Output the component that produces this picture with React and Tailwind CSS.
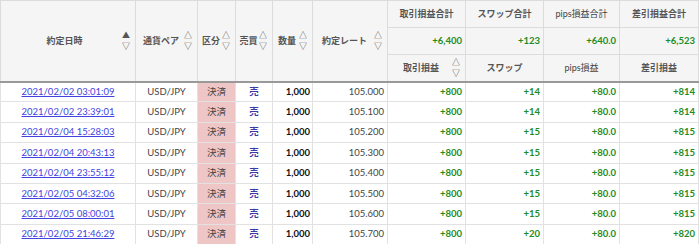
import React from "react";

const rows = [
  ["2021/02/02 03:01:09", "105.000", "+14", "+814"],
  ["2021/02/02 23:39:01", "105.100", "+14", "+814"],
  ["2021/02/04 15:28:03", "105.200", "+15", "+815"],
  ["2021/02/04 20:43:13", "105.300", "+15", "+815"],
  ["2021/02/04 23:55:12", "105.400", "+15", "+815"],
  ["2021/02/05 04:32:06", "105.500", "+15", "+815"],
  ["2021/02/05 08:00:01", "105.600", "+15", "+815"],
  ["2021/02/05 21:46:29", "105.700", "+20", "+820"],
];

function Arrows({ up = false }) {
  return (
    <div className="flex flex-col items-center leading-[11px] text-[8px] text-[#555]">
      <span>{up ? "▲" : "△"}</span>
      <span>▽</span>
    </div>
  );
}

function SortHead({ label, up, rowSpan, pl = "" }) {
  return (
    <th
      rowSpan={rowSpan}
      className="border border-[#dcdcdc] bg-[#f5f5f5] p-0 font-bold"
    >
      <div className="flex items-center pl-[2px] pr-[5px]">
        <span className={"flex-1 text-center whitespace-nowrap " + pl}>{label}</span>
        <Arrows up={up} />
      </div>
    </th>
  );
}

export default function App() {
  const font = { fontFamily: "Lato, 'Noto Sans CJK JP', sans-serif" };
  return (
    <div className="w-[700px] h-[244px] overflow-hidden bg-white" style={font}>
      <table className="table-fixed border-collapse w-[698px] text-[9.5px] text-[#333]">
        <colgroup>
          <col className="w-[135px]" />
          <col className="w-[62px]" />
          <col className="w-[38px]" />
          <col className="w-[37px]" />
          <col className="w-[40px]" />
          <col className="w-[75px]" />
          <col className="w-[78px]" />
          <col className="w-[78px]" />
          <col className="w-[76px]" />
          <col className="w-[79px]" />
        </colgroup>
        <thead className="text-[9px] text-[#555]">
          <tr className="h-[27px]">
            <SortHead label="約定日時" up rowSpan={3} pl="pl-[4px]" />
            <SortHead label="通貨ペア" rowSpan={3} />
            <SortHead label="区分" rowSpan={3} />
            <SortHead label="売買" rowSpan={3} />
            <SortHead label="数量" rowSpan={3} />
            <SortHead label="約定レート" rowSpan={3} />
            <th className="border border-[#dcdcdc] bg-[#f5f5f5] font-bold">取引損益合計</th>
            <th className="border border-[#dcdcdc] bg-[#f5f5f5] font-bold">スワップ合計</th>
            <th className="border border-[#dcdcdc] bg-[#f5f5f5] font-normal text-[#444]">pips損益合計</th>
            <th className="border border-[#dcdcdc] bg-[#f5f5f5] font-bold">差引損益合計</th>
          </tr>
          <tr className="h-[27px] text-[9.5px] text-[#1e8c1e]">
            <th className="border border-[#dcdcdc] bg-[#f5f5f5] text-right pr-[3px] font-bold">+6,400</th>
            <th className="border border-[#dcdcdc] bg-[#f5f5f5] text-right pr-[3px] font-bold">+123</th>
            <th className="border border-[#dcdcdc] bg-[#f5f5f5] text-right pr-[3px] font-bold">+640.0</th>
            <th className="border border-[#dcdcdc] bg-[#f5f5f5] text-right pr-[3px] font-bold">+6,523</th>
          </tr>
          <tr className="h-[27px] border-b-2 border-b-[#999]">
            <SortHead label="取引損益" />
            <th className="border border-[#dcdcdc] bg-[#f5f5f5] font-bold">スワップ</th>
            <th className="border border-[#dcdcdc] bg-[#f5f5f5] font-normal text-[#444]">pips損益</th>
            <th className="border border-[#dcdcdc] bg-[#f5f5f5] font-bold">差引損益</th>
          </tr>
        </thead>
        <tbody>
          {rows.map((r) => (
            <tr key={r[0]} className="h-[20.4px] border-b border-[#e2e2e2]">
              <td className="border-x border-[#e2e2e2] text-center p-0">
                <a href="#" className="text-[#4343e0] underline">{r[0]}</a>
              </td>
              <td className="border-x border-[#e2e2e2] text-center p-0 text-[#444]">USD/JPY</td>
              <td className="border-x border-[#e2e2e2] text-center p-0 bg-[#efc6c6] text-[#444]">決済</td>
              <td className="border-x border-[#e2e2e2] text-center p-0 text-[#3a3aa8] font-bold">売</td>
              <td className="border-x border-[#e2e2e2] text-right pr-[2px] font-bold text-[#111]">1,000</td>
              <td className="border-x border-[#e2e2e2] text-right pr-[3px] text-[#444]">{r[1]}</td>
              <td className="border-x border-[#e2e2e2] text-right pr-[3px] text-[#1e8c1e] font-bold">+800</td>
              <td className="border-x border-[#e2e2e2] text-right pr-[3px] text-[#1e8c1e] font-bold">{r[2]}</td>
              <td className="border-x border-[#e2e2e2] text-right pr-[3px] text-[#1e8c1e] font-bold">+80.0</td>
              <td className="border-x border-[#e2e2e2] text-right pr-[3px] text-[#1e8c1e] font-bold">{r[3]}</td>
            </tr>
          ))}
        </tbody>
      </table>
    </div>
  );
}
